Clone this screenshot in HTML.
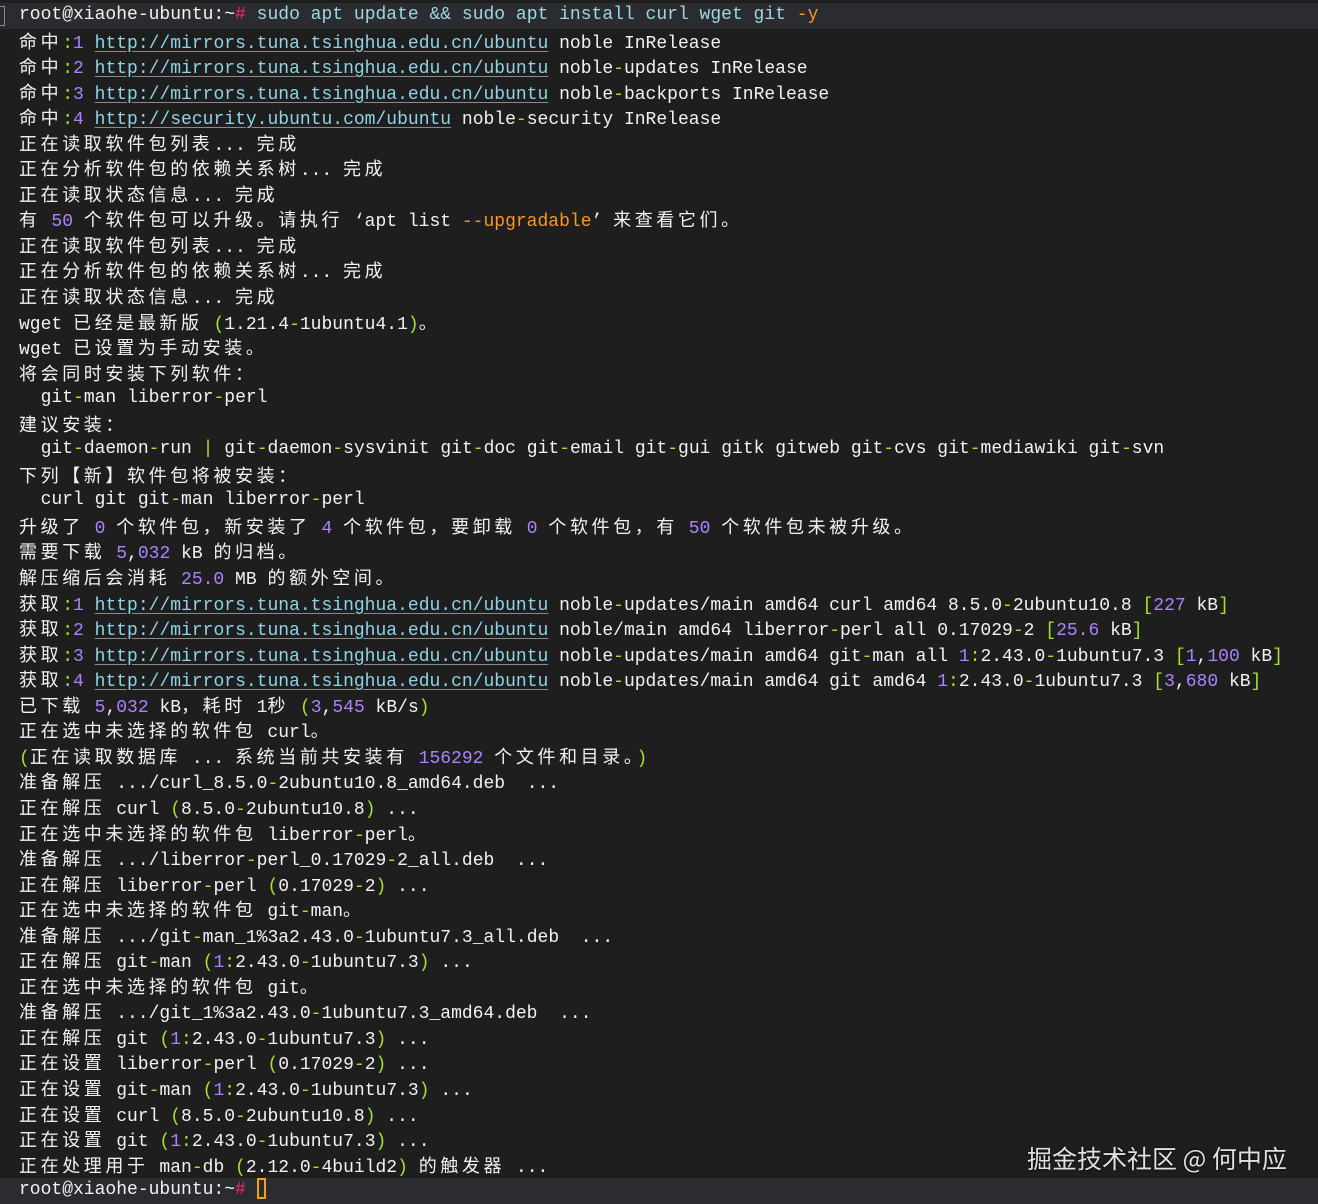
<!DOCTYPE html>
<html><head><meta charset="utf-8"><style>
html,body{margin:0;padding:0;background:#1e1e1e;width:1318px;height:1203px;overflow:hidden}
pre{margin:0;position:absolute;left:0;top:3px;width:1318px;font-family:"Liberation Mono","Noto Sans CJK SC",monospace;font-size:18px;line-height:25.55px;color:#f2f2f2;}
pre div{padding-left:19px;height:25.55px;white-space:pre;overflow:hidden}
pre div.hl{background:#2b2c30}
i{font-style:normal;letter-spacing:3.6px;font-family:"Noto Sans CJK SC",sans-serif}
e{color:#a6e22e} n{color:#ae81ff} o{color:#fd971f} p{display:inline;color:#f92672} k{color:#9fd6e4}
u{color:#8fd3e6;text-decoration:underline;text-decoration-color:#8a8a8a;text-underline-offset:3px}
.cur{display:inline-block;width:9px;height:21px;border:2px solid #f0a020;vertical-align:-5px;box-sizing:border-box}
.wm{position:absolute;left:1027px;top:1140px;font-family:"Noto Sans CJK SC",sans-serif;font-size:25px;color:#e0e0e0;text-shadow:0 0 2px #000}
.lm{position:absolute;left:0;top:6px;width:4px;height:18px;border:1px solid #888;border-left:none}
</style></head><body>
<pre id="t"><div class="hl">root@xiaohe-ubuntu:~<p>#</p> <k>sudo apt update &amp;&amp; sudo apt install curl wget git</k> <o>-y</o></div><div>命中<e>:</e><n>1</n> <u>http://mirrors.tuna.tsinghua.edu.cn/ubuntu</u> noble InRelease</div><div>命中<e>:</e><n>2</n> <u>http://mirrors.tuna.tsinghua.edu.cn/ubuntu</u> noble<e>-</e>updates InRelease</div><div>命中<e>:</e><n>3</n> <u>http://mirrors.tuna.tsinghua.edu.cn/ubuntu</u> noble<e>-</e>backports InRelease</div><div>命中<e>:</e><n>4</n> <u>http://security.ubuntu.com/ubuntu</u> noble<e>-</e>security InRelease</div><div>正在读取软件包列表... 完成</div><div>正在分析软件包的依赖关系树... 完成</div><div>正在读取状态信息... 完成</div><div>有 <n>50</n> 个软件包可以升级。请执行 ‘apt list <o>--upgradable</o>’ 来查看它们。</div><div>正在读取软件包列表... 完成</div><div>正在分析软件包的依赖关系树... 完成</div><div>正在读取状态信息... 完成</div><div>wget 已经是最新版 <e>(</e>1.21.4<e>-</e>1ubuntu4.1<e>)</e>。</div><div>wget 已设置为手动安装。</div><div>将会同时安装下列软件：</div><div>  git<e>-</e>man liberror<e>-</e>perl</div><div>建议安装：</div><div>  git<e>-</e>daemon<e>-</e>run <e>|</e> git<e>-</e>daemon<e>-</e>sysvinit git<e>-</e>doc git<e>-</e>email git<e>-</e>gui gitk gitweb git<e>-</e>cvs git<e>-</e>mediawiki git<e>-</e>svn</div><div>下列【新】软件包将被安装：</div><div>  curl git git<e>-</e>man liberror<e>-</e>perl</div><div>升级了 <n>0</n> 个软件包，新安装了 <n>4</n> 个软件包，要卸载 <n>0</n> 个软件包，有 <n>50</n> 个软件包未被升级。</div><div>需要下载 <n>5</n>,<n>032</n> kB 的归档。</div><div>解压缩后会消耗 <n>25.0</n> MB 的额外空间。</div><div>获取<e>:</e><n>1</n> <u>http://mirrors.tuna.tsinghua.edu.cn/ubuntu</u> noble<e>-</e>updates/main amd64 curl amd64 8.5.0<e>-</e>2ubuntu10.8 <e>[</e><n>227</n> kB<e>]</e></div><div>获取<e>:</e><n>2</n> <u>http://mirrors.tuna.tsinghua.edu.cn/ubuntu</u> noble/main amd64 liberror<e>-</e>perl all 0.17029<e>-</e>2 <e>[</e><n>25.6</n> kB<e>]</e></div><div>获取<e>:</e><n>3</n> <u>http://mirrors.tuna.tsinghua.edu.cn/ubuntu</u> noble<e>-</e>updates/main amd64 git<e>-</e>man all <n>1</n><e>:</e>2.43.0<e>-</e>1ubuntu7.3 <e>[</e><n>1</n>,<n>100</n> kB<e>]</e></div><div>获取<e>:</e><n>4</n> <u>http://mirrors.tuna.tsinghua.edu.cn/ubuntu</u> noble<e>-</e>updates/main amd64 git amd64 <n>1</n><e>:</e>2.43.0<e>-</e>1ubuntu7.3 <e>[</e><n>3</n>,<n>680</n> kB<e>]</e></div><div>已下载 <n>5</n>,<n>032</n> kB，耗时 1秒 <e>(</e><n>3</n>,<n>545</n> kB/s<e>)</e></div><div>正在选中未选择的软件包 curl。</div><div><e>(</e>正在读取数据库 ... 系统当前共安装有 <n>156292</n> 个文件和目录。<e>)</e></div><div>准备解压 .../curl_8.5.0<e>-</e>2ubuntu10.8_amd64.deb  ...</div><div>正在解压 curl <e>(</e>8.5.0<e>-</e>2ubuntu10.8<e>)</e> ...</div><div>正在选中未选择的软件包 liberror<e>-</e>perl。</div><div>准备解压 .../liberror<e>-</e>perl_0.17029<e>-</e>2_all.deb  ...</div><div>正在解压 liberror<e>-</e>perl <e>(</e>0.17029<e>-</e>2<e>)</e> ...</div><div>正在选中未选择的软件包 git<e>-</e>man。</div><div>准备解压 .../git<e>-</e>man_1%3a2.43.0<e>-</e>1ubuntu7.3_all.deb  ...</div><div>正在解压 git<e>-</e>man <e>(</e><n>1</n><e>:</e>2.43.0<e>-</e>1ubuntu7.3<e>)</e> ...</div><div>正在选中未选择的软件包 git。</div><div>准备解压 .../git_1%3a2.43.0<e>-</e>1ubuntu7.3_amd64.deb  ...</div><div>正在解压 git <e>(</e><n>1</n><e>:</e>2.43.0<e>-</e>1ubuntu7.3<e>)</e> ...</div><div>正在设置 liberror<e>-</e>perl <e>(</e>0.17029<e>-</e>2<e>)</e> ...</div><div>正在设置 git<e>-</e>man <e>(</e><n>1</n><e>:</e>2.43.0<e>-</e>1ubuntu7.3<e>)</e> ...</div><div>正在设置 curl <e>(</e>8.5.0<e>-</e>2ubuntu10.8<e>)</e> ...</div><div>正在设置 git <e>(</e><n>1</n><e>:</e>2.43.0<e>-</e>1ubuntu7.3<e>)</e> ...</div><div>正在处理用于 man<e>-</e>db <e>(</e>2.12.0<e>-</e>4build2<e>)</e> 的触发器 ...</div><div class="hl">root@xiaohe-ubuntu:~<p>#</p> <span class="cur"></span></div></pre>
<div class="lm"></div>
<div class="wm">掘金技术社区 @ 何中应</div>
<script>
var t=document.getElementById('t');
t.innerHTML=t.innerHTML.replace(/([^\x00-\x7f‘’]+)/g,'<i>$1</i>');
</script>
</body></html>
